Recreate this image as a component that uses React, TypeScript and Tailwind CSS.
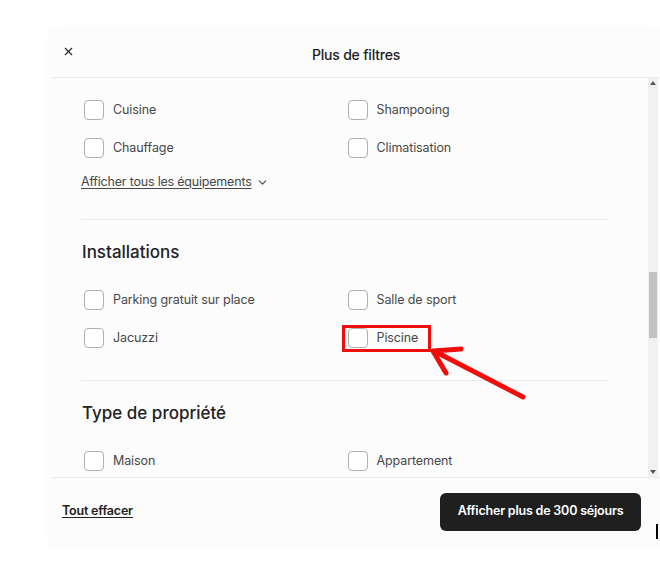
import { X, ChevronDown } from "lucide-react";

interface Row {
  left: string;
  right: string;
  highlight?: boolean;
}

const amenities: Row[] = [
  { left: "Cuisine", right: "Shampooing" },
  { left: "Chauffage", right: "Climatisation" },
];

const facilities: Row[] = [
  { left: "Parking gratuit sur place", right: "Salle de sport" },
  { left: "Jacuzzi", right: "Piscine", highlight: true },
];

const propertyTypes: Row[] = [{ left: "Maison", right: "Appartement" }];

function Check({ label, highlight }: { label: string; highlight?: boolean }) {
  return (
    <div className="flex h-[38px] items-center">
      <div
        className={
          highlight
            ? "relative -ml-[3px] flex h-[27px] w-[89px] items-center border-[3px] border-[#f20d0d] pl-[3px]"
            : "flex items-center pl-[3px]"
        }
      >
        <span className="h-[20px] w-[20px] shrink-0 rounded-[4px] border border-[#b0b0b0] bg-white" />
        <span className="ml-[9px] text-[12.5px] tracking-[-0.1px] text-[#484848]">{label}</span>
      </div>
    </div>
  );
}

function Rows({ rows }: { rows: Row[] }) {
  return (
    <div>
      {rows.map((r) => (
        <div key={r.left} className="grid grid-cols-2">
          <Check label={r.left} />
          <Check label={r.right} highlight={r.highlight} />
        </div>
      ))}
    </div>
  );
}

export default function App() {
  return (
    <div
      className="relative h-[575px] w-[660px] overflow-hidden bg-white"
      style={{ fontFamily: "Inter, 'Noto Sans', sans-serif" }}
    >
      <div className="absolute left-[52px] top-[30px] flex h-[515px] w-[608px] flex-col bg-[#fcfcfc] shadow-[0_0_12px_rgba(0,0,0,0.04)]">
        {/* header */}
        <div className="relative flex h-[48px] shrink-0 items-center justify-center border-b border-[#ececec]">
          <X className="absolute left-[10px] top-[15px] h-[13px] w-[13px] text-[#222]" strokeWidth={2} />
          <span className="mt-[2px] text-[14px] font-medium tracking-[-0.2px] text-[#222]">Plus de filtres</span>
        </div>

        {/* body */}
        <div className="flex h-[400px] shrink-0 border-b border-[#ececec]">
          <div className="flex-1 overflow-hidden pl-[29px] pr-[40px] pt-[13px]">
            <Rows rows={amenities} />
            <div className="flex h-[30px] items-center">
              <span className="text-[12.5px] tracking-[-0.2px] text-[#484848] underline underline-offset-2">
                Afficher tous les équipements
              </span>
              <ChevronDown className="ml-[4px] h-[13px] w-[13px] text-[#484848]" strokeWidth={2} />
            </div>
            <div className="mt-[22px] border-t border-[#e8e8e8]" />
            <h2 className="mt-[21px] flex h-[24px] items-center pl-[1px] text-[17px] font-medium text-[#222]">
              Installations
            </h2>
            <div className="mt-[16px]">
              <Rows rows={facilities} />
            </div>
            <div className="mt-[23px] border-t border-[#e8e8e8]" />
            <h2 className="mt-[21px] flex h-[24px] items-center pl-[1px] text-[17px] font-medium text-[#222]">
              Type de propriété
            </h2>
            <div className="mt-[16px]">
              <Rows rows={propertyTypes} />
            </div>
          </div>
          {/* scrollbar */}
          <div className="relative mr-[2px] flex w-[10px] flex-col items-center justify-between bg-[#f1f1f1] py-[3px]">
            <span className="h-0 w-0 border-x-[3px] border-b-[4px] border-x-transparent border-b-[#555]" />
            <span className="h-0 w-0 border-x-[3px] border-t-[4px] border-x-transparent border-t-[#555]" />
            <span className="absolute left-[1px] top-[194px] h-[66px] w-[8px] bg-[#c1c1c1]" />
          </div>
        </div>

        {/* footer */}
        <div className="flex flex-1 items-center justify-between pl-[10px] pr-[19px]">
          <span className="text-[12.5px] font-semibold tracking-[-0.2px] text-[#222] underline underline-offset-2">
            Tout effacer
          </span>
          <button className="h-[38px] w-[201px] rounded-[6px] bg-[#1f1f1f] text-[12.5px] font-semibold tracking-[-0.2px] text-white">
            Afficher plus de 300 séjours
          </button>
        </div>
      </div>

      {/* annotation arrow */}
      <svg className="absolute left-0 top-0" width="660" height="575">
        <line x1="523" y1="397" x2="436" y2="352" stroke="#f20d0d" strokeWidth="5" strokeLinecap="round" />
        <polyline
          points="461,349 433,351 446,373"
          fill="none"
          stroke="#f20d0d"
          strokeWidth="5"
          strokeLinecap="round"
          strokeLinejoin="round"
        />
      </svg>

      <span className="absolute left-[656px] top-[524px] h-[15px] w-[2px] bg-black" />
    </div>
  );
}
